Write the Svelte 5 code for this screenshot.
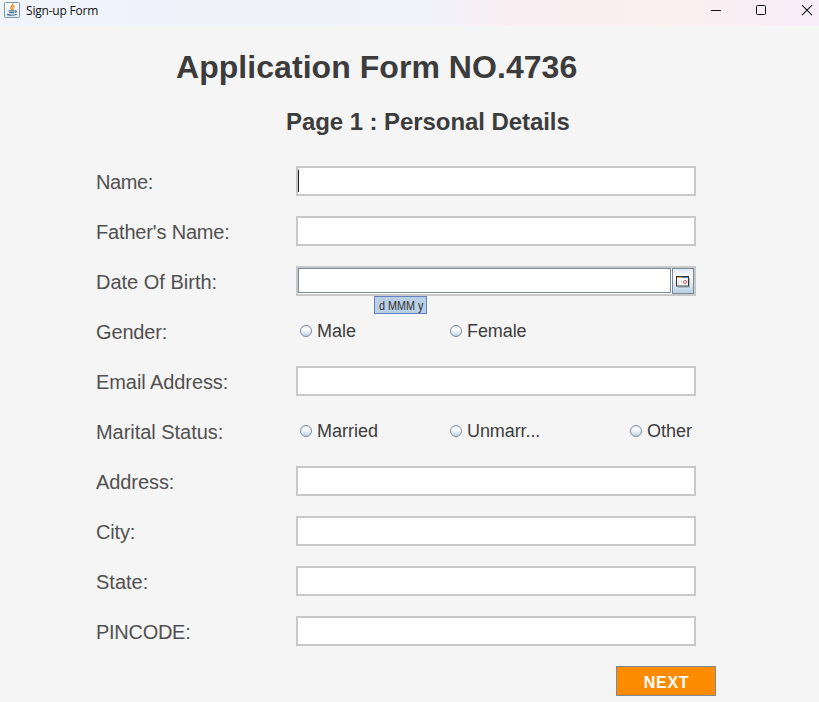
<script>
  const fields = [
    { label: 'Name:', type: 'text', spacing: -0.4 },
    { label: "Father's Name:", type: 'text', spacing: -0.17 },
    { label: 'Date Of Birth:', type: 'date', spacing: 0 },
    { label: 'Gender:', type: 'radio', spacing: -0.15, options: ['Male', 'Female'] },
    { label: 'Email Address:', type: 'text', spacing: -0.08 },
    { label: 'Marital Status:', type: 'radio', spacing: -0.04, options: ['Married', 'Unmarr...', 'Other'] },
    { label: 'Address:', type: 'text', spacing: -0.08 },
    { label: 'City:', type: 'text', spacing: -0.15 },
    { label: 'State:', type: 'text', spacing: 0 },
    { label: 'PINCODE:', type: 'text', spacing: -0.28 }
  ];
</script>

<div class="window">
  <header>
    <svg class="java" width="16" height="16" viewBox="0 0 16 16">
      <defs>
        <linearGradient id="tile" x1="0" y1="0" x2="0" y2="1">
          <stop offset="0" stop-color="#fff" /><stop offset="1" stop-color="#dce7ef" />
        </linearGradient>
      </defs>
      <rect x=".5" y=".5" width="15" height="15" rx="1" fill="url(#tile)" stroke="#8298aa" />
      <path d="M8.8 1.4C9.3 3.6 5.9 4.5 6.9 6.3L8.2 8M10.8 3.8C8.3 4.8 8.5 5.8 9.1 6.8L8.7 8" fill="none" stroke="#ef8a22" stroke-width="1.3" />
      <path d="M4.6 8.8H10.3M5.2 10.7H10M10.5 8.8Q13 8.5 12 10L10.8 10.8M3 12.4Q7.5 14.2 12.9 12.2" fill="none" stroke="#4b7396" stroke-width="1.2" />
    </svg>
    <span class="caption">Sign-up Form</span>
    <svg class="controls" width="104" height="20" viewBox="0 0 104 20" fill="none" stroke="#111">
      <path d="M0 10.5H10" />
      <rect x="45.5" y="5.5" width="9" height="9" rx="1" />
      <path d="M91 5.2L101 15.2M101 5.2L91 15.2" stroke-width="1.1" />
    </svg>
  </header>

  <main>
    <h1>Application Form NO.4736</h1>
    <h2>Page 1 : Personal Details</h2>
    <div class="form">
      {#each fields as field, i}
        <div class="row">
          <span class="label" style:letter-spacing="{field.spacing}px">{field.label}</span>
          {#if field.type === 'text'}
            <div class="input">{#if i === 0}<i class="caret"></i>{/if}</div>
          {:else if field.type === 'date'}
            <div class="input date">
              <div class="inner"></div>
              <div class="picker">
                <svg width="15" height="12" viewBox="0 0 15 12">
                  <path d="M13.5 2V11.5H2" fill="none" stroke="#a9b6c2" />
                  <rect x=".5" y=".5" width="12" height="9.5" fill="#fff" />
                  <path d="M1 1.5H5" stroke="#f5b03c" /><path d="M6 1.5H12" stroke="#4c82bd" />
                  <path d="M2.5 4V9M5.5 4V9" stroke="#dedede" />
                  <rect x=".5" y=".5" width="12" height="9.5" fill="none" stroke="#333" />
                  <circle cx="9" cy="6" r="1.5" fill="#fff" stroke="#e06464" stroke-width="1.2" />
                </svg>
              </div>
              <div class="tip"><span>d MMM y</span></div>
            </div>
          {:else}
            <div class="radios">
              {#each field.options as option}
                <div class="option">
                  <svg width="12" height="12" viewBox="0 0 12 12">
                    <defs>
                      <linearGradient id="dot" x1="0" y1="0" x2="0" y2="1">
                        <stop offset="0" stop-color="#dce8f3" /><stop offset=".35" stop-color="#fff" /><stop offset="1" stop-color="#b8cfe5" />
                      </linearGradient>
                    </defs>
                    <circle cx="6" cy="6" r="5.5" fill="url(#dot)" stroke="#7a8a99" />
                  </svg>
                  <span>{option}</span>
                </div>
              {/each}
            </div>
          {/if}
        </div>
      {/each}
    </div>
    <div class="next"><span>NEXT</span></div>
  </main>
</div>

<style>
  .window {
    width: 819px;
    height: 702px;
    overflow: hidden;
    background: #f5f5f5;
    font-family: 'Liberation Sans', Arial, sans-serif;
  }
  header {
    display: flex;
    box-sizing: border-box;
    height: 26px;
    padding: 0 4px;
    background: linear-gradient(90deg, #eff3fa 0%, #f1f2fa 52%, #f9eff3 62%, #faf0f0 82%, #f9eef5 94%, #f7edf8 100%);
  }
  .java { margin-top: 2px; }
  .caption {
    margin-left: 6px;
    font: 12px/22px 'Open Sans', 'Noto Sans', sans-serif;
    letter-spacing: -0.2px;
    color: #111;
    white-space: nowrap;
  }
  .controls { margin-left: auto; }
  main { display: flex; flex-direction: column; }
  h1, h2 { margin: 0; font-weight: bold; color: #3c3c3c; white-space: nowrap; }
  h1 { margin: 21px 0 0 176px; font-size: 32px; line-height: 40px; letter-spacing: 0.05px; }
  h2 { margin: 20px 0 0 286px; font-size: 24px; line-height: 30px; letter-spacing: -0.07px; }
  .form { display: flex; flex-direction: column; margin: 19px 0 0 96px; }
  .row { display: flex; box-sizing: border-box; height: 50px; align-items: flex-start; padding-top: 10px; }
  .label { width: 200px; font-size: 20px; line-height: 32px; color: #505050; white-space: nowrap; }
  .input {
    position: relative;
    box-sizing: border-box;
    width: 400px;
    height: 30px;
    border: 2px solid #c8c8c8;
    background: #fff;
  }
  .caret { display: block; width: 1px; height: 22px; margin-top: 2px; background: #222; }
  .date { display: flex; }
  .inner { box-sizing: border-box; width: 373px; height: 25px; border: 1px solid #7a8a99; margin-right: 1px; }
  .picker {
    display: flex;
    box-sizing: border-box;
    width: 22px;
    height: 26px;
    padding: 7px 0 0 3px;
    border: 1px solid #7a8a99;
    background: linear-gradient(#dfe9f3, #fff 32%, #b8cfe5);
  }
  .picker svg { flex: none; }
  .tip {
    position: absolute;
    left: 76px;
    top: 28px;
    box-sizing: border-box;
    width: 53px;
    height: 18px;
    padding-left: 4px;
    border: 1px solid #6382bf;
    background: #b8cfe5;
    color: #333;
    font-size: 12px;
    line-height: 18px;
    white-space: nowrap;
  }
  .tip span { display: inline-block; transform: scaleX(0.9); transform-origin: left; }
  .radios { display: flex; padding-left: 4px; }
  .option { display: flex; width: 150px; height: 30px; font-size: 18px; line-height: 30px; color: #3c3c3c; }
  .option:nth-child(2) { width: 180px; }
  .option:nth-child(2) span { letter-spacing: -0.08px; }
  .option:nth-child(3) { width: 70px; }
  .option svg { margin: 9px 5px 0 0; }
  .next {
    box-sizing: border-box;
    width: 100px;
    height: 30px;
    margin: 10px 0 0 616px;
    border: 1px solid #7a8a99;
    background: #ff8c00;
    color: #fff;
    font-size: 16px;
    font-weight: bold;
    line-height: 31px;
    letter-spacing: 0.7px;
    text-indent: 1px;
    text-align: center;
  }
</style>
